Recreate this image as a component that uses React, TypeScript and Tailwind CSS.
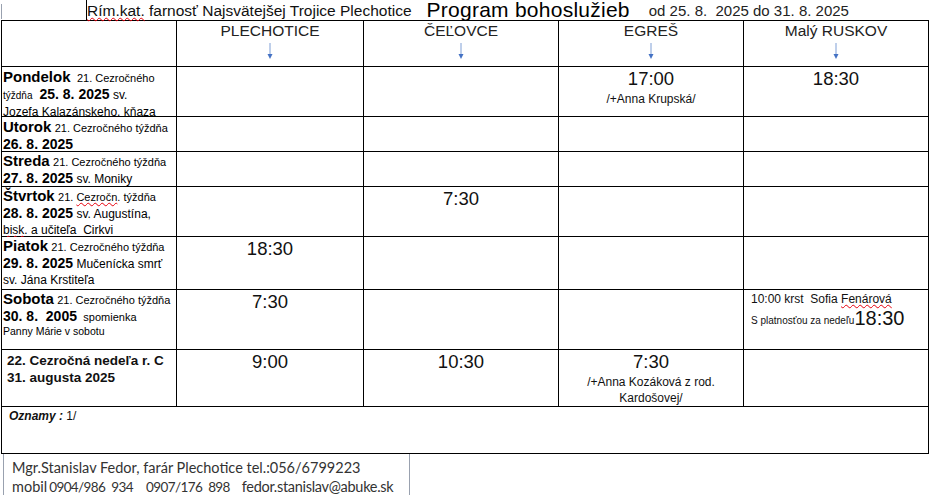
import React from 'react'

const FONT = { fontFamily: '"Liberation Sans", Arial, sans-serif' }

// spell-check squiggle like in the source document
function Sq({ children }: { children: React.ReactNode }) {
  return (
    <span className="underline decoration-wavy decoration-red-600 decoration-1 underline-offset-[1px]">{children}</span>
  )
}

function Arrow() {
  return (
    <svg width="8" height="17" viewBox="0 0 8 17" className="mx-auto mt-[3px] block">
      <line x1="4" y1="0" x2="4" y2="13" stroke="#7f9fd6" strokeWidth="1" />
      <path d="M1.5 11 L4 16 L6.5 11 Z" fill="#4472c4" />
    </svg>
  )
}

const PLACES = ['PLECHOTICE', 'ČEĽOVCE', 'EGREŠ', 'Malý RUSKOV']

function Time({ t, sub }: { t?: string; sub?: React.ReactNode }) {
  return (
    <div className="bg-white pt-[1px] text-center text-[#111]">
      {t && <div className="text-[18.5px] leading-[22px]">{t}</div>}
      {sub && <div className="mt-[1px] text-[12px] leading-[16px]">{sub}</div>}
    </div>
  )
}

const Empty = () => <div className="bg-white" />

function Day({ children }: { children: React.ReactNode }) {
  return <div className="bg-white pl-[1px] pt-[1px] text-[12px] leading-[16px] text-black">{children}</div>
}

export default function App() {
  return (
    <div className="h-[495px] w-[929px] overflow-hidden bg-white" style={FONT}>
      {/* Title line */}
      <div className="relative flex h-[20px] items-end whitespace-nowrap">
        <div className="absolute left-[1px] top-[4px] h-[15px] w-px bg-gray-400" />
        <div className="ml-[86px] flex h-[20px] items-end border-l border-black pb-[1px] text-[15.5px] leading-[17px] text-[#111]">
          <span>
            <Sq>Rím.kat.</Sq> farnosť Najsvätejšej Trojice Plechotice
          </span>
        </div>
        <span className="ml-[15px] text-[21px] leading-[20px] tracking-[0.25px]">Program bohoslužieb</span>
        <span className="ml-[19px] pb-[1px] text-[15px] leading-[17px] text-[#222]">od 25. 8.&nbsp; 2025 do 31. 8. 2025</span>
      </div>

      {/* Schedule table */}
      <div className="ml-[1px] grid w-[928px] grid-cols-[174px_186px_194px_184px_184px] grid-rows-[45px_49px_34px_34px_49px_52px_59px_56px_46px] gap-px border border-black bg-black">
        <Empty />
        {PLACES.map((p) => (
          <div key={p} className="bg-white pt-[1px] text-center text-[15.5px] leading-[18px] text-[#222]">
            {p}
            <Arrow />
          </div>
        ))}

        {/* Pondelok */}
        <Day>
          <div className="pt-[1px]">
            <b className="text-[15px]">Pondelok</b> <span className="text-[11px]">&nbsp;21. Cezročného</span>
          </div>
          <div>
            <span className="text-[10px]">týždňa</span>
            <b className="ml-[7px] text-[14px]">25. 8. 2025</b> <span>sv.</span>
          </div>
          <div>
            Jozefa <Sq>Kalazánskeho</Sq>, kňaza
          </div>
        </Day>
        <Empty />
        <Empty />
        <Time t="17:00" sub="/+Anna Krupská/" />
        <Time t="18:30" />

        {/* Utorok */}
        <Day>
          <div className="pt-[1px]">
            <b className="text-[15px]">Utorok</b> <span className="text-[11px]">21. Cezročného týždňa</span>
          </div>
          <b className="text-[14px]">26. 8. 2025</b>
        </Day>
        <Empty />
        <Empty />
        <Empty />
        <Empty />

        {/* Streda */}
        <Day>
          <div>
            <b className="text-[15px]">Streda</b> <span className="text-[11px]">21. Cezročného týždňa</span>
          </div>
          <div>
            <b className="text-[14px]">27. 8. 2025</b> sv. Moniky
          </div>
        </Day>
        <Empty />
        <Empty />
        <Empty />
        <Empty />

        {/* Štvrtok */}
        <Day>
          <div>
            <b className="text-[15px]">Štvrtok</b>{' '}
            <span className="text-[11px]">
              21. <Sq>Cezročn</Sq>. týždňa
            </span>
          </div>
          <div>
            <b className="text-[14px]">28. 8. 2025</b> sv. Augustína,
          </div>
          <div>
            <Sq>bisk</Sq>. a učiteľa&nbsp; Cirkvi
          </div>
        </Day>
        <Empty />
        <Time t="7:30" />
        <Empty />
        <Empty />

        {/* Piatok */}
        <Day>
          <div>
            <b className="text-[15px]">Piatok</b> <span className="text-[11px]">21. Cezročného týždňa</span>
          </div>
          <div>
            <b className="text-[14px]">29. 8. 2025</b> Mučenícka smrť
          </div>
          <div>sv. Jána Krstiteľa</div>
        </Day>
        <Time t="18:30" />
        <Empty />
        <Empty />
        <Empty />

        {/* Sobota */}
        <Day>
          <div>
            <b className="text-[15px]">Sobota</b> <span className="text-[11px]">21. Cezročného týždňa</span>
          </div>
          <div>
            <b className="text-[14px]">30. 8.&nbsp; 2005</b> <span className="text-[11px]">&nbsp;spomienka</span>
          </div>
          <div className="text-[10.5px] leading-[13px]">Panny Márie v sobotu</div>
        </Day>
        <Time t="7:30" />
        <Empty />
        <Empty />
        <div className="bg-white pl-[7px] pt-[1px] text-[12px] text-[#111]">
          <div className="leading-[16px]">
            10:00 krst&nbsp; Sofia <Sq>Fenárová</Sq>
          </div>
          <div className="mt-[1px] flex items-end leading-none">
            <span className="pb-[2px] text-[10px]">S platnosťou za nedeľu</span>
            <span className="text-[20px]">18:30</span>
          </div>
        </div>

        {/* Nedeľa */}
        <div className="bg-white pl-[5px] pt-[2px] text-[13.5px] font-bold leading-[17px] text-[#111]">
          <div>22. Cezročná nedeľa r. C</div>
          <div>31. augusta 2025</div>
        </div>
        <Time t="9:00" />
        <Time t="10:30" />
        <Time
          t="7:30"
          sub={
            <>
              /+Anna Kozáková z rod.
              <br />
              Kardošovej/
            </>
          }
        />
        <Empty />

        {/* Oznamy */}
        <div className="col-span-5 bg-white pl-[7px] pt-[1px] text-[12px] leading-[16px] text-[#111]">
          <b className="italic">Oznamy :</b> 1/
        </div>
      </div>

      {/* Contact box */}
      <div
        className="ml-[3px] w-[407px] border-x border-gray-400 px-[8px] pt-[4px] text-[14.5px] leading-[19px] text-[#333]"
        style={{ fontFamily: 'Lato, "Open Sans", sans-serif' }}
      >
        <div>Mgr.Stanislav Fedor, farár Plechotice tel.:056/6799223</div>
        <div className="flex items-baseline whitespace-nowrap">
          <span>mobil</span>
          <span className="ml-[2px] text-[13.5px] tracking-[-0.6px]">0904/986</span>
          <span className="ml-[6px] text-[13.5px] tracking-[-0.6px]">934</span>
          <span className="ml-[13px] text-[13.5px] tracking-[-0.6px]">0907/176</span>
          <span className="ml-[6px] text-[13.5px] tracking-[-0.6px]">898</span>
          <span className="ml-[12px] tracking-[-0.3px]">fedor.stanislav@abuke.sk</span>
        </div>
      </div>
    </div>
  )
}
